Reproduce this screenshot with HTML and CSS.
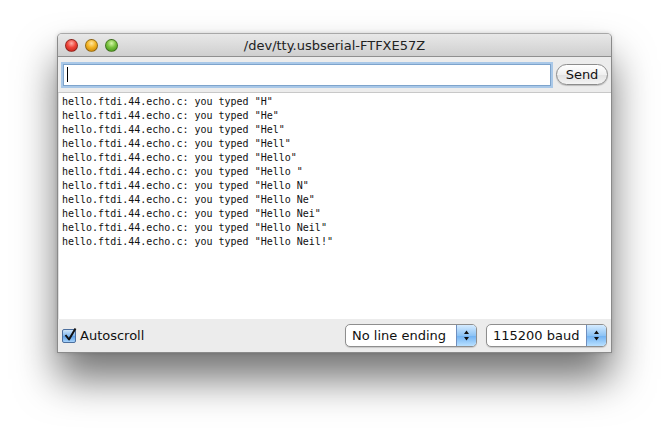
FILE: index.html
```html
<!DOCTYPE html>
<html lang="en">
<head>
  <meta charset="UTF-8" />
  <title>/dev/tty.usbserial-FTFXE57Z</title>
  <link rel="stylesheet" href="styles.css">
</head>
<body>

  <div class="window">
    <div class="titlebar">
      <div class="lights">
        <span class="light red"></span>
        <span class="light yellow"></span>
        <span class="light green"></span>
      </div>
      <div class="title">/dev/tty.usbserial-FTFXE57Z</div>
    </div>

    <div class="send-row">
      <div class="input"><span class="caret"></span></div>
      <button class="send-btn">Send</button>
    </div>

    <div class="output">
      <div class="line">hello.ftdi.44.echo.c: you typed "H"</div>
      <div class="line">hello.ftdi.44.echo.c: you typed "He"</div>
      <div class="line">hello.ftdi.44.echo.c: you typed "Hel"</div>
      <div class="line">hello.ftdi.44.echo.c: you typed "Hell"</div>
      <div class="line">hello.ftdi.44.echo.c: you typed "Hello"</div>
      <div class="line">hello.ftdi.44.echo.c: you typed "Hello "</div>
      <div class="line">hello.ftdi.44.echo.c: you typed "Hello N"</div>
      <div class="line">hello.ftdi.44.echo.c: you typed "Hello Ne"</div>
      <div class="line">hello.ftdi.44.echo.c: you typed "Hello Nei"</div>
      <div class="line">hello.ftdi.44.echo.c: you typed "Hello Neil"</div>
      <div class="line">hello.ftdi.44.echo.c: you typed "Hello Neil!"</div>
    </div>

    <div class="statusbar">
      <label class="autoscroll">
        <span class="checkbox">
          <svg width="14" height="14" viewBox="0 0 14 14">
            <path d="M2.5 7 L6 11.5 L12.5 0.5" fill="none" stroke="#111" stroke-width="2" stroke-linejoin="round"/>
          </svg>
        </span>
        Autoscroll
      </label>
      <div class="spacer"></div>
      <div class="select line-ending">
        <span class="select-label">No line ending</span>
        <span class="arrows">
          <svg width="7" height="11" viewBox="0 0 7 11"><path d="M3.5 0.5 L6 4 H1 Z M3.5 10.5 L6 7 H1 Z" fill="#111"/></svg>
        </span>
      </div>
      <div class="select baud">
        <span class="select-label">115200 baud</span>
        <span class="arrows">
          <svg width="7" height="11" viewBox="0 0 7 11"><path d="M3.5 0.5 L6 4 H1 Z M3.5 10.5 L6 7 H1 Z" fill="#111"/></svg>
        </span>
      </div>
    </div>
  </div>

</body>
</html>
```

FILE: styles.css
```css
* {
  box-sizing: border-box;
  margin: 0;
  padding: 0;
}

body {
  background: #ffffff;
  font-family: 'DejaVu Sans', 'Liberation Sans', sans-serif;
  padding: 33px 57px 0;
  width: 668px;
  height: 431px;
  overflow: hidden;
}

.window {
  width: 555px;
  height: 320px;
  display: flex;
  flex-direction: column;
  background: #ececec;
  border: 1px solid #8a8a8a;
  border-top-color: #a8a8a8;
  border-radius: 5px 5px 0 0;
  box-shadow: 0 26px 40px rgba(0, 0, 0, 0.55), 0 0 4px rgba(0, 0, 0, 0.15);
}

.titlebar {
  height: 23px;
  flex-shrink: 0;
  display: flex;
  align-items: center;
  position: relative;
  background: linear-gradient(#e8e8e8, #cfcfcf);
  border-bottom: 1px solid #8f8f8f;
  border-radius: 4px 4px 0 0;
}

.lights {
  display: flex;
  gap: 7px;
  padding-left: 7px;
}

.light {
  width: 13px;
  height: 13px;
  border-radius: 50%;
  border: 1px solid rgba(0, 0, 0, 0.35);
}

.red {
  background: radial-gradient(circle at 50% 30%, #ffb0a8 0, #f0453a 45%, #b81e16 100%);
}

.yellow {
  background: radial-gradient(circle at 50% 30%, #ffe6a0 0, #f4b524 45%, #bd7a05 100%);
}

.green {
  background: radial-gradient(circle at 50% 30%, #d5f5a8 0, #79c33e 45%, #3d8a16 100%);
}

.title {
  position: absolute;
  left: 0;
  right: 0;
  text-align: center;
  font-size: 13px;
  color: #222;
  pointer-events: none;
}

.send-row {
  height: 36px;
  flex-shrink: 0;
  display: flex;
  align-items: center;
  gap: 5px;
  padding: 0 3px 0 5px;
  border-bottom: 1px solid #c8c8c8;
}

.input {
  flex: 1;
  height: 22px;
  background: #ffffff;
  border: 1px solid #7ea4cc;
  box-shadow: 0 0 0 2px #a9c8e8;
  display: flex;
  align-items: center;
  padding-left: 3px;
}

.caret {
  width: 1px;
  height: 15px;
  background: #000;
}

.send-btn {
  width: 52px;
  height: 21px;
  border: 1px solid #8c8c8c;
  border-radius: 11px;
  background: linear-gradient(#ffffff, #f0f0f0 50%, #e2e2e2 51%, #f4f4f4);
  font-family: 'DejaVu Sans', sans-serif;
  font-size: 13px;
  color: #111;
  box-shadow: 0 1px 1px rgba(0, 0, 0, 0.2);
}

.output {
  flex: 1;
  min-height: 0;
  overflow: hidden;
  background: #ffffff;
  border-left: 1px solid #e0e0e0;
  padding: 2px 3px;
  font-family: 'DejaVu Sans Mono', monospace;
  font-size: 10px;
  line-height: 14px;
  color: #111;
}

.line {
  white-space: pre;
}

.statusbar {
  height: 33px;
  flex-shrink: 0;
  display: flex;
  align-items: center;
  padding: 0 4px 0 4px;
  background: #ececec;
}

.autoscroll {
  display: flex;
  align-items: center;
  gap: 4px;
  font-size: 13px;
  color: #111;
}

.checkbox {
  width: 14px;
  height: 14px;
  border: 1px solid #4c6f9e;
  border-radius: 2px;
  background: linear-gradient(#cfe6fb, #7fb5ec 50%, #5b9ee6 51%, #a5d2fb);
  display: flex;
  position: relative;
}

.checkbox svg {
  position: absolute;
  left: 0;
  top: -2px;
}

.spacer {
  flex: 1;
}

.select {
  height: 23px;
  display: flex;
  align-items: stretch;
  border: 1px solid #8e8e8e;
  border-radius: 5px;
  background: #ffffff;
  overflow: hidden;
  box-shadow: 0 1px 1px rgba(0, 0, 0, 0.15);
  font-size: 13px;
  color: #111;
}

.line-ending {
  width: 132px;
  margin-right: 9px;
}

.baud {
  width: 121px;
}

.select-label {
  flex: 1;
  display: flex;
  align-items: center;
  padding-left: 6px;
}

.arrows {
  width: 20px;
  display: flex;
  align-items: center;
  justify-content: center;
  border-left: 1px solid #6f8fbf;
  background: linear-gradient(#d5ebff, #8ec4f5 50%, #6fb1f2 51%, #b9e0ff);
}
```
